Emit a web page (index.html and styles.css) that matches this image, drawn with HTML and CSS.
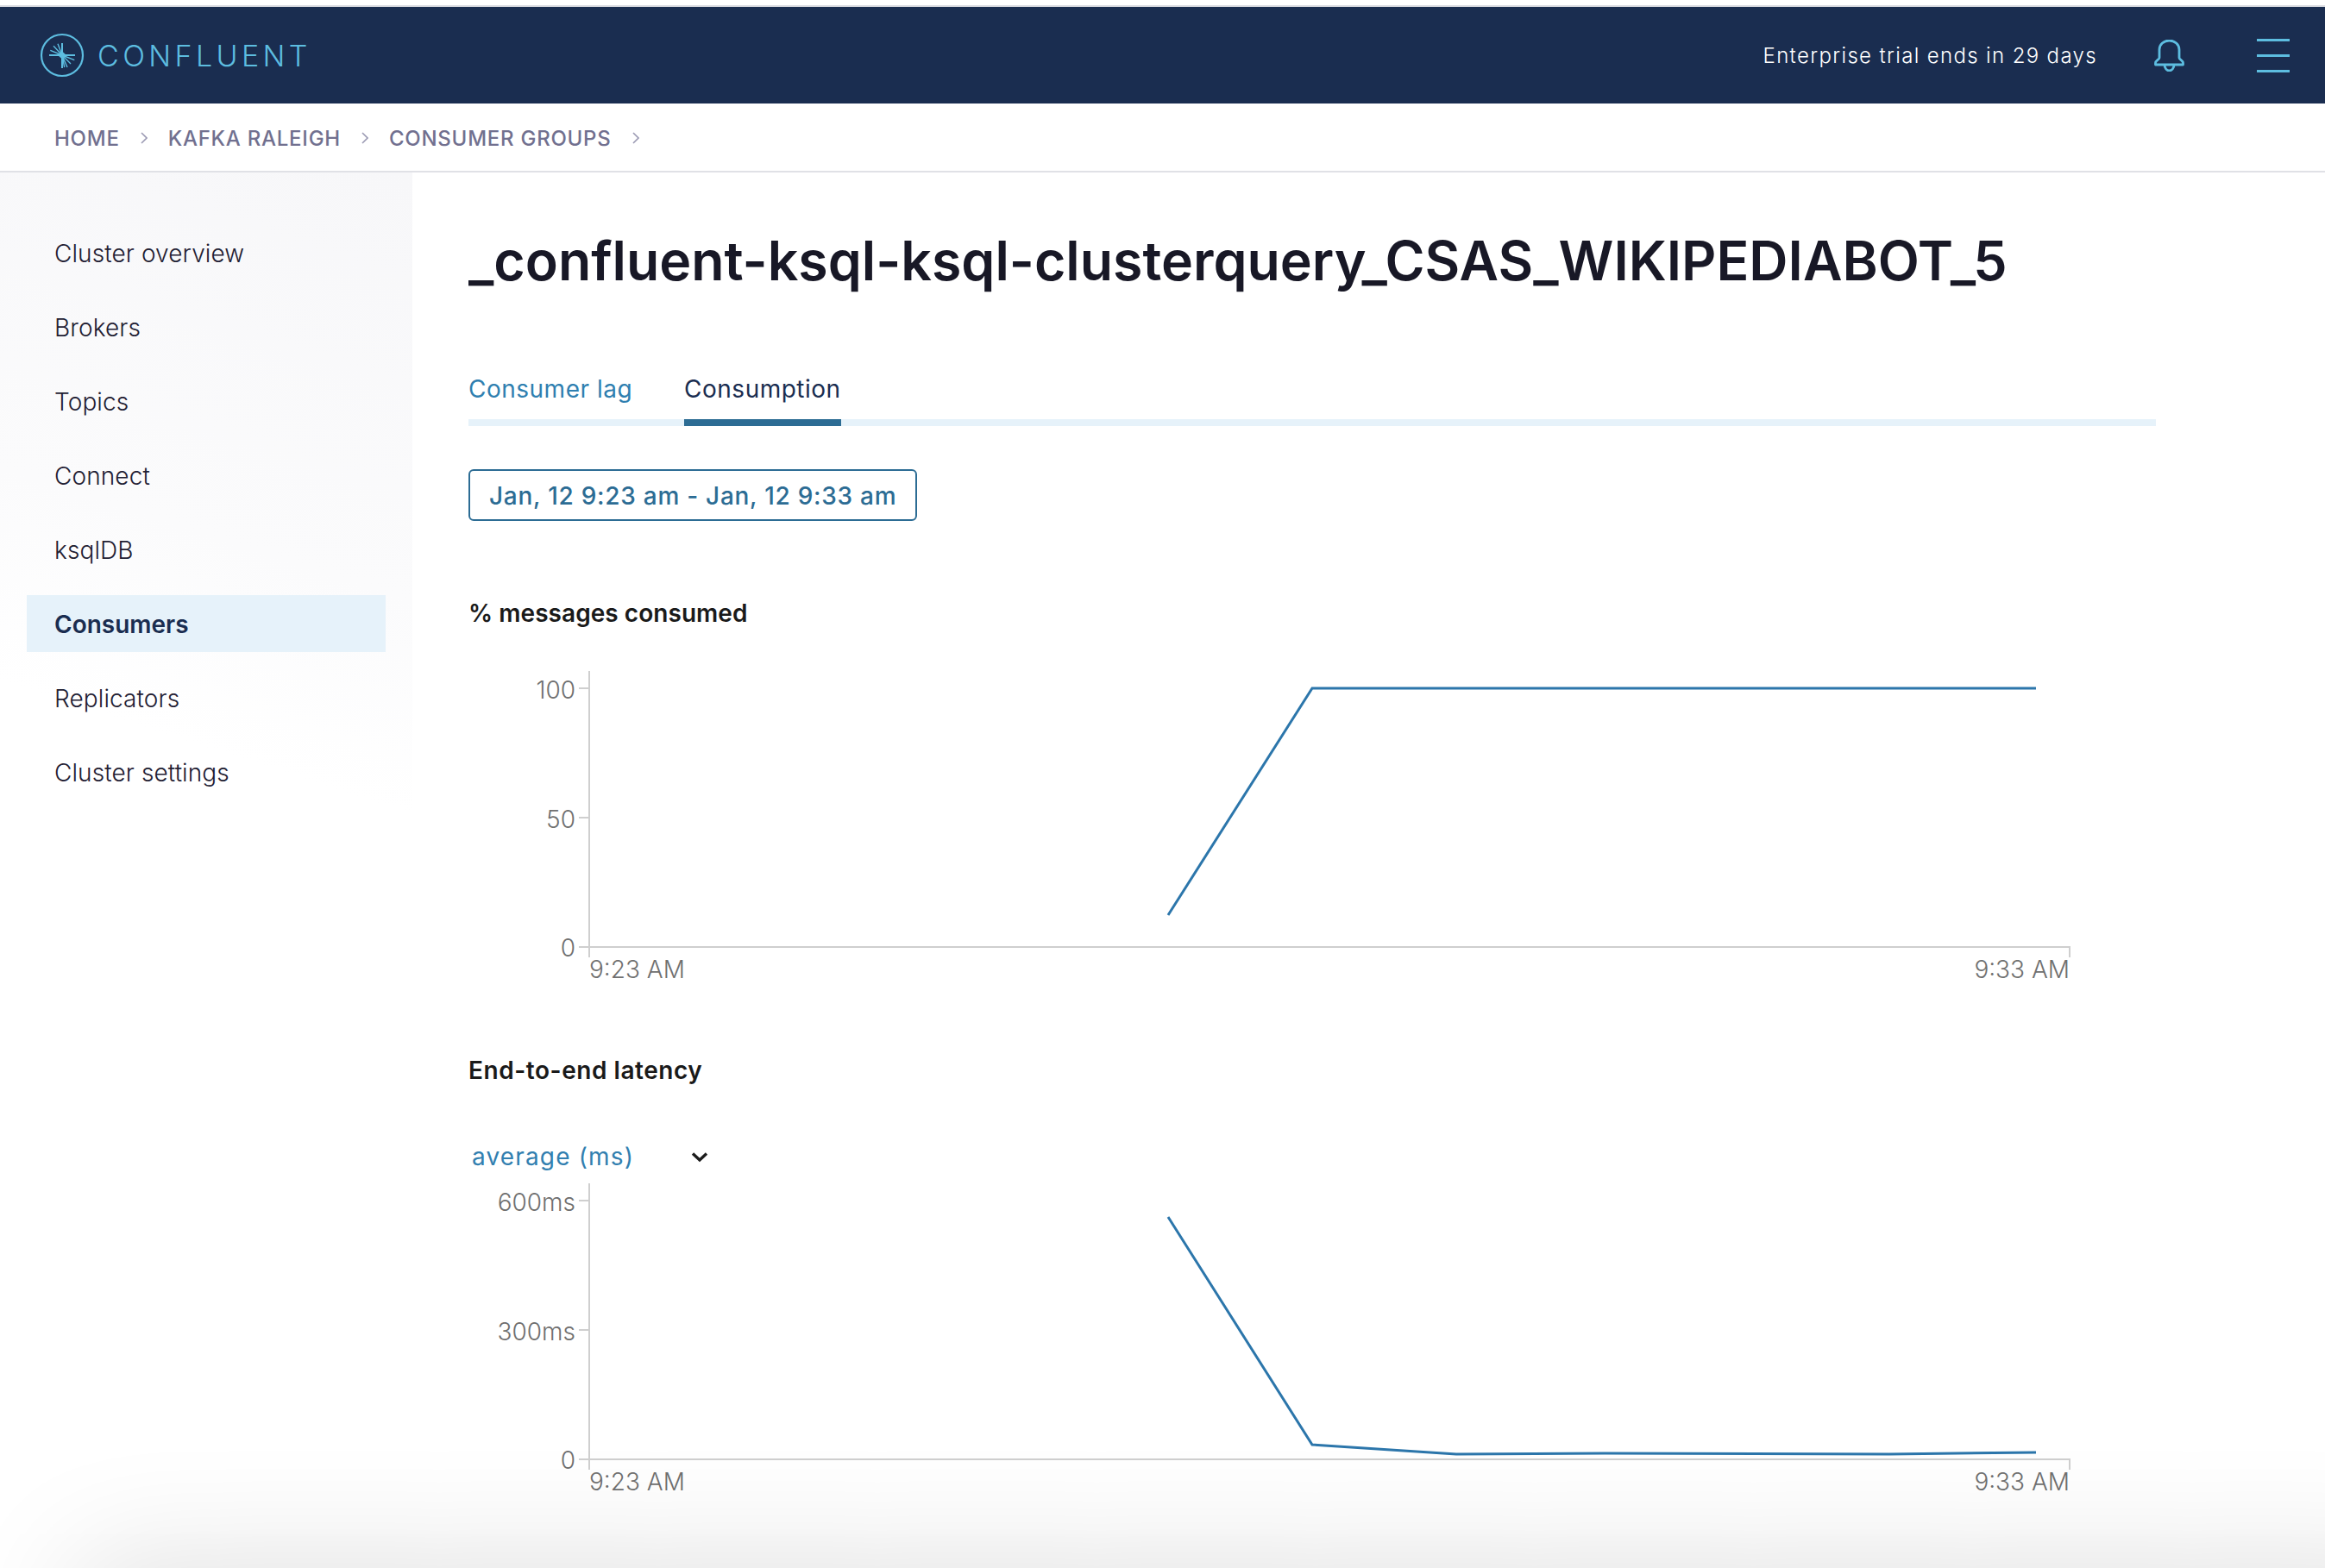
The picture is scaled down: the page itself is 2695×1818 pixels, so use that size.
FILE: index.html
```html
<!DOCTYPE html>
<html lang="en">
<head>
<meta charset="utf-8">
<title>Confluent</title>
<link rel="stylesheet" href="styles.css">
</head>
<body>
<div class="page">
  <header class="topbar">
    <div class="brand">
      <svg class="logo" width="52" height="52" viewBox="-26 -26 52 52" fill="none" stroke="#5dbde0">
        <circle r="24" stroke-width="2.2"/>
        <path d="M-15 0H15M0 -14V15" stroke-width="2"/>
        <path d="M0 0L-13.7 -5.7M0 0L-10 -10.7M0 0L-5 -13.3M0 0L14.3 5.7M0 0L10 10M0 0L6 14M0 0L2.7 14" stroke-width="1.4"/>
        <path d="M-5 0L0 -4.5L5 0L0 4.5Z" fill="#5dbde0" stroke="none"/>
      </svg>
      <span class="wordmark">CONFLUENT</span>
    </div>
    <div class="top-right">
      <span class="trial">Enterprise trial ends in 29 days</span>
      <svg class="bell" width="35" height="37" viewBox="0 0 35 37" fill="none" stroke="#5dbde0" stroke-width="2.8" stroke-linejoin="round">
        <path d="M6 21V11.5A11.5 10.5 0 0 1 29 11.5V21C29 23 33.5 24 33.5 27V29H1.5V27C1.5 24 6 23 6 21Z"/>
        <path d="M12 29C12 33 14.5 36 17.5 36C20.5 36 23 33 23 29"/>
      </svg>
      <div class="burger"><span></span><span></span><span></span></div>
    </div>
  </header>

  <nav class="crumbs">
    <a>HOME</a>
    <svg class="chev" width="8" height="14" viewBox="0 0 8 14"><path d="M1 1L7 7L1 13" fill="none" stroke="#9c9bb4" stroke-width="1.6"/></svg>
    <a>KAFKA RALEIGH</a>
    <svg class="chev" width="8" height="14" viewBox="0 0 8 14"><path d="M1 1L7 7L1 13" fill="none" stroke="#9c9bb4" stroke-width="1.6"/></svg>
    <a>CONSUMER GROUPS</a>
    <svg class="chev" width="8" height="14" viewBox="0 0 8 14"><path d="M1 1L7 7L1 13" fill="none" stroke="#9c9bb4" stroke-width="1.6"/></svg>
  </nav>

  <div class="layout">
    <aside class="sidebar">
      <a class="side-item">Cluster overview</a>
      <a class="side-item">Brokers</a>
      <a class="side-item">Topics</a>
      <a class="side-item">Connect</a>
      <a class="side-item">ksqlDB</a>
      <a class="side-item active">Consumers</a>
      <a class="side-item">Replicators</a>
      <a class="side-item">Cluster settings</a>
    </aside>

    <main class="main">
      <h1 class="title">_confluent-ksql-ksql-clusterquery_CSAS_WIKIPEDIABOT_5</h1>

      <div class="tabs">
        <a class="tab">Consumer lag</a>
        <a class="tab current">Consumption</a>
      </div>

      <button class="range">Jan, 12 9:23 am - Jan, 12 9:33 am</button>

      <h2 class="section first">% messages consumed</h2>
      <svg class="chart chart-one" width="1880" height="370" viewBox="543 770 1880 370">
        <path class="axis" d="M683 778V1110M671 798H683M671 948H683M671 1098H2399V1110"/>
        <text class="lbl" x="667" y="810" text-anchor="end">100</text>
        <text class="lbl" x="667" y="960" text-anchor="end">50</text>
        <text class="lbl" x="667" y="1109" text-anchor="end">0</text>
        <text class="lbl" x="683" y="1134">9:23 AM</text>
        <text class="lbl" x="2399" y="1134" text-anchor="end">9:33 AM</text>
        <polyline class="line" points="1354,1061 1521,798 2360,798"/>
      </svg>

      <h2 class="section second">End-to-end latency</h2>
      <div class="picker">
        <span>average (ms)</span>
        <svg width="20" height="13" viewBox="0 0 20 13"><path d="M2 2.5L10 10L18 2.5" fill="none" stroke="#1c1c1c" stroke-width="3.4"/></svg>
      </div>
      <svg class="chart chart-two" width="1880" height="380" viewBox="543 1360 1880 380">
        <path class="axis" d="M683 1372V1704M671 1392H683M671 1542H683M671 1692H2399V1704"/>
        <text class="lbl" x="667" y="1404" text-anchor="end">600ms</text>
        <text class="lbl" x="667" y="1554" text-anchor="end">300ms</text>
        <text class="lbl" x="667" y="1703" text-anchor="end">0</text>
        <text class="lbl" x="683" y="1728">9:23 AM</text>
        <text class="lbl" x="2399" y="1728" text-anchor="end">9:33 AM</text>
        <polyline class="line" points="1354,1411 1521,1675 1688,1686 1860,1685 2190,1686 2360,1684"/>
      </svg>
    </main>
  </div>
  <div class="window-shade"></div>
</div>
</body>
</html>
```
FILE: styles.css
```css
* { box-sizing: border-box; }
html, body { margin: 0; padding: 0; background: #fff; }
body { font-family: Inter, "Liberation Sans", sans-serif; }
.page {
  position: relative;
  width: 2695px;
  height: 1818px;
  overflow: hidden;
  padding-top: 6px;
}
.topbar {
  height: 114px;
  border-top: 2px solid #dcdde2;
  background: #1a2d50;
  display: flex;
  align-items: center;
  justify-content: space-between;
  padding: 0 41px 0 46px;
}
.brand { display: flex; align-items: center; gap: 15px; }
.logo { display: block; }
.wordmark {
  font-size: 34px;
  font-weight: 300;
  letter-spacing: 4.4px;
  color: #5dbde0;
}
.top-right { display: flex; align-items: center; }
.trial {
  font-size: 24px;
  font-weight: 300;
  letter-spacing: 1.35px;
  color: #fff;
}
.bell { margin-left: 66px; display: block; }
.burger {
  margin-left: 84px;
  width: 38px;
  height: 39px;
  display: flex;
  flex-direction: column;
  justify-content: space-between;
}
.burger span { display: block; height: 3px; background: #5dbde0; }
.crumbs {
  height: 80px;
  border-bottom: 2px solid #e0e1e6;
  display: flex;
  align-items: center;
  padding: 2px 0 0 63px;
  font-size: 24px;
  font-weight: 500;
  letter-spacing: 0.75px;
  color: #71708f;
}
.chev { margin: 0 24px; display: block; }
.layout { display: flex; height: 1618px; }
.sidebar {
  width: 478px;
  flex: none;
  padding: 60px 31px 0;
  display: flex;
  flex-direction: column;
  gap: 20px;
  background: linear-gradient(198deg, #f7f7f9 0%, #fbfbfc 28%, #fff 42%);
}
.side-item {
  height: 66px;
  display: flex;
  align-items: center;
  padding: 2px 0 0 32px;
  font-size: 28px;
  font-weight: 300;
  letter-spacing: 0.1px;
  color: #1f2033;
}
.side-item.active {
  background: #e6f2fa;
  color: #1a2d50;
  font-weight: 600;
  letter-spacing: 0;
}
.main { flex: 1; padding-left: 65px; }
.title {
  margin: 62px 0 0;
  font-size: 62.6px;
  line-height: 80px;
  font-weight: 600;
  color: #181826;
  white-space: nowrap;
}
.tabs {
  margin-top: 88px;
  width: 1956px;
  height: 64px;
  display: flex;
  gap: 60px;
  border-bottom: 8px solid #e6f2fa;
}
.tab {
  height: 64px;
  padding-bottom: 14px;
  line-height: 42px;
  font-size: 28px;
  font-weight: 400;
  letter-spacing: 0.5px;
  color: #2f7fb0;
}
.tab.current {
  color: #1a2d50;
  border-bottom: 8px solid #2c6c94;
}
.range {
  display: block;
  margin: 50px 0 0;
  height: 60px;
  padding: 2px 22px 0;
  background: #fff;
  border: 2px solid #2c6c94;
  border-radius: 6px;
  font-family: inherit;
  font-size: 28px;
  font-weight: 500;
  letter-spacing: 0.73px;
  color: #2c6c94;
}
.section {
  margin: 0;
  height: 40px;
  line-height: 42px;
  font-size: 28px;
  font-weight: 600;
  color: #1a1a1a;
}
.section.first { margin-top: 86px; letter-spacing: 0.05px; }
.section.second { margin-top: 80px; letter-spacing: 0.55px; }
.chart { display: block; }
.chart-one { margin-top: 40px; }
.axis { fill: none; stroke: #cfcfcf; stroke-width: 2; }
.line { fill: none; stroke: #2c76ab; stroke-width: 3; stroke-linejoin: miter; }
.lbl { font-size: 28px; font-weight: 300; fill: #707070; font-family: Inter, "Liberation Sans", sans-serif; }
.picker {
  margin: 62px 0 0 4px;
  height: 38px;
  width: 274px;
  display: flex;
  align-items: center;
  justify-content: space-between;
  font-size: 28px;
  font-weight: 400;
  letter-spacing: 1.15px;
  color: #327fb0;
}
.window-shade {
  position: absolute;
  left: 90px;
  right: -200px;
  top: 1818px;
  height: 200px;
  box-shadow: 0 0 150px rgba(0, 0, 0, 0.14);
}
```
